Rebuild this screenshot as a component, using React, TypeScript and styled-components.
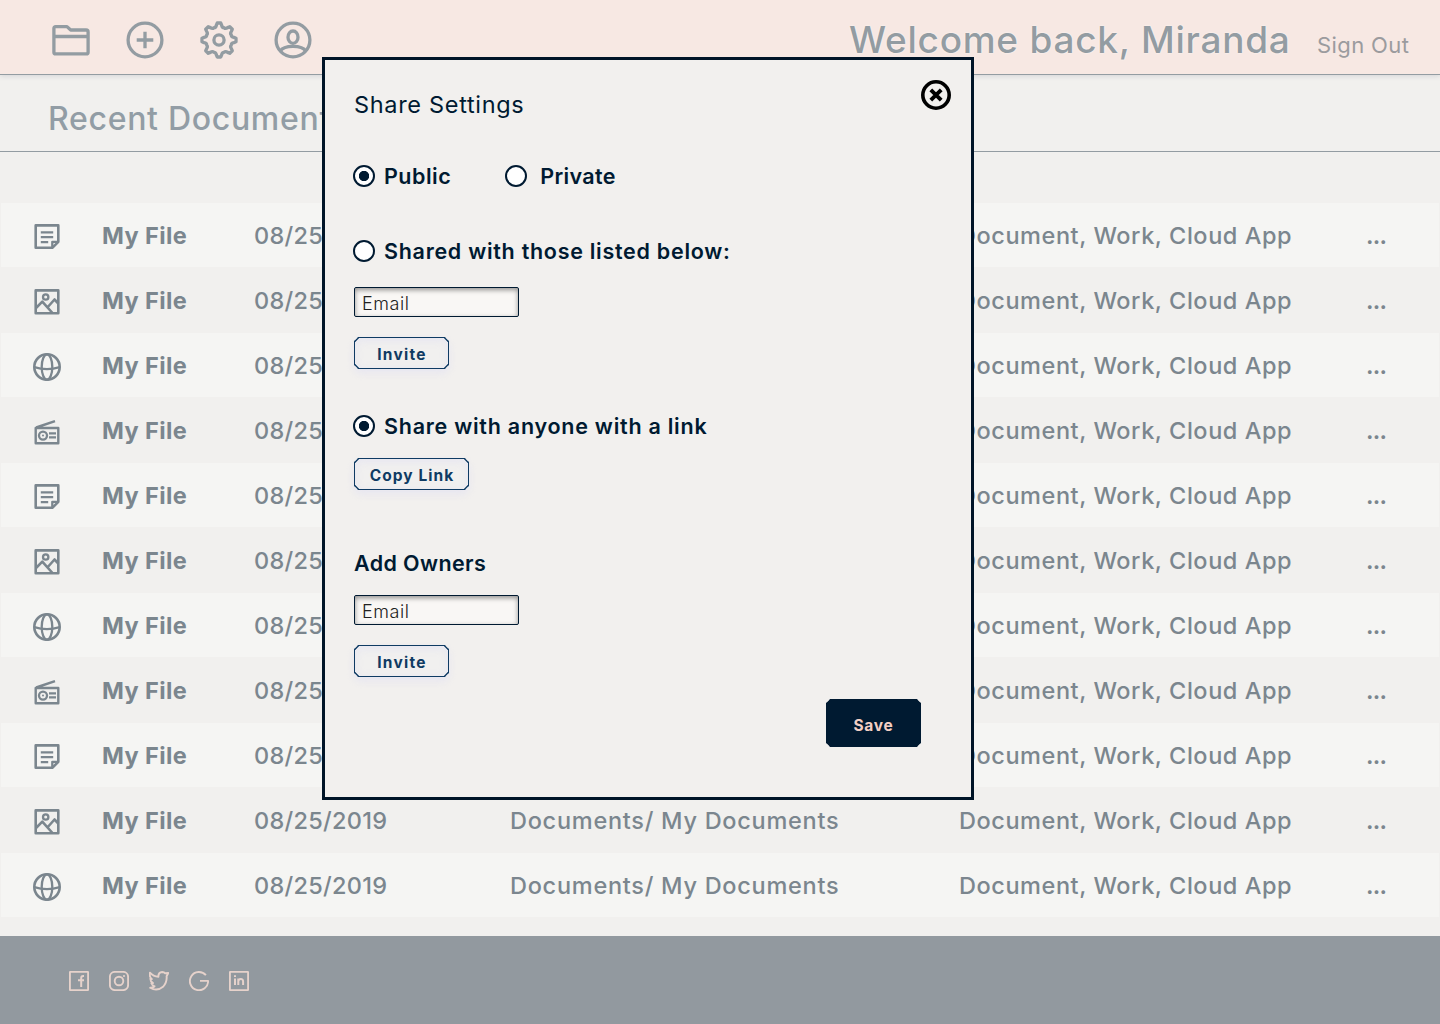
import React from "react";
import styled, { createGlobalStyle } from "styled-components";

const ink = "#001a31";
const muted = "#939ca2";

const GlobalStyle = createGlobalStyle`
  *, *::before, *::after { box-sizing: border-box; }
  body { margin: 0; }
  h1, h2, h3, p { margin: 0; font-weight: inherit; }
  button, input { font: inherit; }
`;

const Page = styled.div`
  position: relative;
  display: flex;
  flex-direction: column;
  width: 1440px;
  height: 1024px;
  overflow: hidden;
  background: #f1f0ee;
  color: #7b868e;
  font-family: Inter, "Liberation Sans", sans-serif;
  white-space: nowrap;
`;

const Header = styled.header`
  display: flex;
  align-items: center;
  justify-content: space-between;
  height: 75px;
  padding: 6px 30px 0 52px;
  background: #f7e8e3;
  border-bottom: 1px solid ${muted};
  box-shadow: 0 1px 5px rgba(60, 60, 90, 0.16);
  flex: none;
`;

const Nav = styled.nav`
  display: flex;
  gap: 36px;
  color: ${muted};
`;

const NavIcon = styled.svg`
  display: block;
  width: 38px;
  height: 38px;
  fill: none;
  stroke: currentColor;
  stroke-width: 3.3;
  stroke-linejoin: round;
`;

const Account = styled.div`
  display: flex;
  align-items: center;
  color: ${muted};
`;

const Welcome = styled.h1`
  width: 468px;
  font-size: 37px;
  font-weight: 450;
  line-height: 40px;
  letter-spacing: 0.75px;
  text-shadow: 0 0 2px rgba(255, 255, 255, 0.9);
`;

const SignOut = styled.a`
  width: 93px;
  padding-top: 10px;
  font-size: 22px;
  line-height: 28px;
  letter-spacing: 0.4px;
  color: #9b9b9e;
`;

const SectionBar = styled.section`
  display: flex;
  align-items: center;
  height: 77px;
  padding: 11px 0 0 48px;
  border-bottom: 1px solid ${muted};
  flex: none;
`;

const SectionTitle = styled.h2`
  font-size: 32px;
  font-weight: 500;
  letter-spacing: 0.7px;
  color: #929da5;
`;

const FileList = styled.main`
  display: flex;
  flex-direction: column;
  padding: 51px 1px 0;
  flex: 1;
`;

const FileRow = styled.div`
  display: grid;
  grid-template-columns: 69px 152px 256px 449px 407px 1fr;
  align-items: center;
  height: 65px;
  padding: 1px 0 0 32px;
  font-size: 23.5px;
  font-weight: 500;
  border-bottom: 1px solid #f1f0ee;

  &:nth-child(odd) { background: #f5f5f3; }
`;

const FileIcon = styled.svg`
  display: block;
  width: 28px;
  height: 28px;
  margin-top: 2px;
  fill: none;
  stroke: currentColor;
  stroke-width: 2.6;
  stroke-linejoin: round;
`;

const FileName = styled.span`
  font-weight: 650;
  letter-spacing: 0.4px;
`;

const FileDate = styled.span`
  letter-spacing: 0.28px;
`;

const FilePath = styled.span`
  letter-spacing: 0.73px;
`;

const FileTags = styled.span`
  letter-spacing: 0.56px;
`;

const More = styled.span`
  font-weight: 600;
  line-height: 28px;
  letter-spacing: -0.8px;
`;

const Footer = styled.footer`
  display: flex;
  gap: 20px;
  height: 88px;
  padding: 35px 0 0 69px;
  background: #92999f;
  color: #e6d2cb;
  flex: none;
`;

const SocialIcon = styled.svg`
  display: block;
  width: 20px;
  height: 20px;
  fill: none;
  stroke: currentColor;
  stroke-width: 1.9;
  stroke-linejoin: round;
`;

const Dialog = styled.section`
  position: absolute;
  left: 322px;
  top: 57px;
  display: flex;
  flex-direction: column;
  align-items: flex-start;
  width: 652px;
  height: 743px;
  padding: 20px 20px 0 29px;
  border: 3px solid #001427;
  background: #f2f0ee;
  color: ${ink};
`;

const DialogHeader = styled.div`
  display: flex;
  justify-content: space-between;
  width: 100%;
  height: 30px;
`;

const DialogTitle = styled.h2`
  padding-top: 10px;
  font-size: 23.5px;
  font-weight: 430;
  line-height: 30px;
  letter-spacing: 0.68px;
`;

const CloseButton = styled.button`
  width: 30px;
  height: 30px;
  padding: 0;
  border: 0;
  background: none;
  color: #000;

  svg { display: block; fill: none; stroke: currentColor; }
`;

const ChoiceRow = styled.div<{ $top: number }>`
  display: flex;
  gap: 54px;
  margin: ${(p) => p.$top}px 0 0 -1px;
`;

const Choice = styled.label<{ $gap?: number; $spacing: number }>`
  display: flex;
  align-items: center;
  gap: ${(p) => p.$gap ?? 9}px;
  height: 22px;
  font-size: 21.5px;
  font-weight: 620;
  line-height: 22px;
  letter-spacing: ${(p) => p.$spacing}px;
`;

const Radio = styled.input.attrs({ type: "radio" })`
  appearance: none;
  width: 22px;
  height: 22px;
  margin: 0;
  border: 2px solid ${ink};
  border-radius: 50%;
  background: #fff;

  &:checked {
    background: radial-gradient(circle, ${ink} 4.8px, #fff 5.5px);
  }
`;

const EmailInput = styled.input.attrs({ type: "text", placeholder: "Email" })<{ $top: number }>`
  width: 165px;
  height: 30px;
  margin-top: ${(p) => p.$top}px;
  padding: 2px 7px 0;
  border: 1px solid ${ink};
  border-radius: 2px;
  background: #f9f7f5;
  box-shadow: inset 0 2px 5px rgba(0, 0, 0, 0.42);
  font-size: 18px;
  font-weight: 300;
  letter-spacing: 0.55px;
  outline: none;

  &::placeholder { color: #222; opacity: 1; }
`;

const Button = styled.button<{ $width: number; $top: number; $spacing: number }>`
  width: ${(p) => p.$width}px;
  height: 32px;
  margin-top: ${(p) => p.$top}px;
  padding: 3px 0 0 1px;
  border: 1px solid #0f3b63;
  border-radius: 4.5px;
  corner-shape: bevel;
  background: #f1f0ef;
  box-shadow: inset 0 2px 10px rgba(215, 215, 245, 0.4), 0 4px 8px rgba(215, 215, 245, 0.4);
  color: #0f3b63;
  font-size: 15.5px;
  font-weight: 650;
  letter-spacing: ${(p) => p.$spacing}px;
`;

const SaveButton = styled(Button)`
  align-self: flex-end;
  height: 48px;
  margin-right: 30px;
  padding: 4px 0 0;
  border-color: ${ink};
  background: ${ink};
  box-shadow: none;
  color: #f3cfc4;
`;

const GroupTitle = styled.h3`
  margin-top: 61px;
  font-size: 21.5px;
  font-weight: 620;
  line-height: 24px;
  letter-spacing: 0.38px;
`;

function gearPath() {
  const at = (r: number, deg: number) => {
    const a = (deg * Math.PI) / 180;
    return `${(19 + r * Math.sin(a)).toFixed(2)} ${(19 - r * Math.cos(a)).toFixed(2)}`;
  };
  let d = "";
  for (let k = 0; k < 8; k++) {
    const c = k * 45;
    d += `${k ? "L" : "M"}${at(17.1, c - 6)}L${at(17.1, c + 6)}`;
    d += `L${at(15.1, c + 10)}Q${at(12.7, c + 14)} ${at(13.3, c + 22.5)}`;
    d += `Q${at(12.7, c + 31)} ${at(15.1, c + 35)}`;
  }
  return d + "Z";
}

type Kind = "note" | "image" | "globe" | "radio";

function KindIcon({ kind }: { kind: Kind }) {
  return (
    <FileIcon viewBox="0 0 28 28">
      {kind === "note" && (
        <>
          <path d="M2.7 2.4h22.6v16.4l-6 6H2.7z" />
          <path d="M19.3 24.5v-5.7h5.7M7.8 9.3h12.4M7.8 14.2h12.4M7.8 19.1h7.4" strokeWidth="2.3" />
        </>
      )}
      {kind === "image" && (
        <>
          <path d="M2.7 2.4h22.6v22.8H2.7z" />
          <circle cx="12.7" cy="9" r="2.7" strokeWidth="2.3" />
          <path d="M3 20l6.3-6.3L19.5 25M14.8 19l6.7-7.5 3.8 4" />
        </>
      )}
      {kind === "globe" && (
        <>
          <circle cx="14" cy="14" r="12.7" />
          <ellipse cx="14" cy="14" rx="5.3" ry="12.7" strokeWidth="2.3" />
          <path d="M1.3 14.2Q14 18.2 26.7 14.2" strokeWidth="2.3" />
        </>
      )}
      {kind === "radio" && (
        <>
          <path d="M2.7 10h22.6v15.3H2.7zM3.2 9.5L22 3.1" strokeWidth="2.4" />
          <circle cx="10" cy="17.6" r="4" strokeWidth="2.3" />
          <circle cx="10" cy="17.6" r="1" fill="currentColor" stroke="none" />
          <path d="M16 15.4h7M16 19.4h7" strokeWidth="2.1" />
        </>
      )}
    </FileIcon>
  );
}

const kinds: Kind[] = ["note", "image", "globe", "radio"];
const files = Array.from({ length: 11 }, (_, i) => ({
  id: i,
  kind: kinds[i % 4],
  name: "My File",
  date: "08/25/2019",
  path: "Documents/ My Documents",
  tags: "Document, Work, Cloud App",
}));

export default function App() {
  return (
    <Page>
      <GlobalStyle />
      <Header>
        <Nav>
          <NavIcon viewBox="0 0 38 38">
            <path d="M1.9 31.2V7.4Q1.9 5.6 3.7 5.6H15l3.7 3.4h15.4q2 0 2 2v20.2q0 1.7-1.8 1.7H3.7q-1.8 0-1.8-1.7zM2 15.5h34" />
          </NavIcon>
          <NavIcon viewBox="0 0 38 38">
            <circle cx="19" cy="19" r="16.9" />
            <path d="M19 10.7v16.6M10.7 19h16.6" />
          </NavIcon>
          <NavIcon viewBox="0 0 38 38">
            <path d={gearPath()} />
            <circle cx="19" cy="19" r="5.1" />
          </NavIcon>
          <NavIcon viewBox="0 0 38 38">
            <circle cx="19" cy="19" r="16.9" />
            <ellipse cx="19" cy="16.2" rx="5" ry="6.2" />
            <path d="M6.3 30Q9 25.3 19 25.3T31.7 30" />
          </NavIcon>
        </Nav>
        <Account>
          <Welcome>Welcome back, Miranda</Welcome>
          <SignOut>Sign Out</SignOut>
        </Account>
      </Header>

      <SectionBar>
        <SectionTitle>Recent Documents</SectionTitle>
      </SectionBar>

      <FileList>
        {files.map((f) => (
          <FileRow key={f.id}>
            <KindIcon kind={f.kind} />
            <FileName>{f.name}</FileName>
            <FileDate>{f.date}</FileDate>
            <FilePath>{f.path}</FilePath>
            <FileTags>{f.tags}</FileTags>
            <More>...</More>
          </FileRow>
        ))}
      </FileList>

      <Footer>
        <SocialIcon viewBox="0 0 20 20">
          <rect x=".9" y=".9" width="18.2" height="18.2" rx=".6" />
          <path d="M15 4.9h-.8q-2 0-2 2V16M9 9.3h6" strokeWidth="2" />
        </SocialIcon>
        <SocialIcon viewBox="0 0 20 20">
          <rect x=".9" y=".9" width="18.2" height="18.2" rx="5" />
          <circle cx="10" cy="10" r="4.3" />
          <circle cx="15" cy="5" r="1.1" fill="currentColor" stroke="none" />
        </SocialIcon>
        <SocialIcon viewBox="0 0 20 20">
          <path d="M.9 1.6Q4.4 5.5 9.4 5.7 9.2 1.2 13.2 1q2 0 3 1.3L19.3 2 17.6 5.3Q18.2 11.5 14 15.8 8 20.8 1.2 16.8q3 .1 4.3-1.5-2.4-.9-3.1-3l1.6-.2Q1.3 10.3 1.3 7.7l1.6.4Q-.2 5.3.9 1.6z" />
        </SocialIcon>
        <SocialIcon viewBox="0 0 20 20">
          <path d="M16.9 4.2A9.1 9.1 0 1 0 19.1 9.9H11" />
        </SocialIcon>
        <SocialIcon viewBox="0 0 20 20">
          <rect x=".9" y=".9" width="18.2" height="18.2" rx=".6" />
          <path d="M6 7.5V14M9.3 14V7.5M9.3 10.5q0-2.5 2.4-2.5t2.4 2.5V14M6 4.2v1.7" strokeWidth="2" />
        </SocialIcon>
      </Footer>

      <Dialog role="dialog" aria-modal="true">
        <DialogHeader>
          <DialogTitle>Share Settings</DialogTitle>
          <CloseButton aria-label="Close">
            <svg width="30" height="30" viewBox="0 0 30 30">
              <circle cx="15" cy="15" r="13.2" strokeWidth="3.6" />
              <path d="M9.8 9.8l10.4 10.4M20.2 9.8L9.8 20.2" strokeWidth="3.9" />
            </svg>
          </CloseButton>
        </DialogHeader>

        <ChoiceRow $top={55}>
          <Choice $spacing={0.5}>
            <Radio name="visibility" defaultChecked />
            <span>Public</span>
          </Choice>
          <Choice $gap={13} $spacing={0.35}>
            <Radio name="visibility" />
            <span>Private</span>
          </Choice>
        </ChoiceRow>

        <ChoiceRow $top={53}>
          <Choice $spacing={0.72}>
            <Radio name="listed" />
            <span>Shared with those listed below:</span>
          </Choice>
        </ChoiceRow>
        <EmailInput $top={25} />
        <Button $width={95} $top={20} $spacing={1.25}>Invite</Button>

        <ChoiceRow $top={46}>
          <Choice $spacing={0.75}>
            <Radio name="link" defaultChecked />
            <span>Share with anyone with a link</span>
          </Choice>
        </ChoiceRow>
        <Button $width={115} $top={21} $spacing={1.05}>Copy Link</Button>

        <GroupTitle>Add Owners</GroupTitle>
        <EmailInput $top={20} />
        <Button $width={95} $top={20} $spacing={1.25}>Invite</Button>
        <SaveButton $width={95} $top={22} $spacing={0.75}>Save</SaveButton>
      </Dialog>
    </Page>
  );
}
